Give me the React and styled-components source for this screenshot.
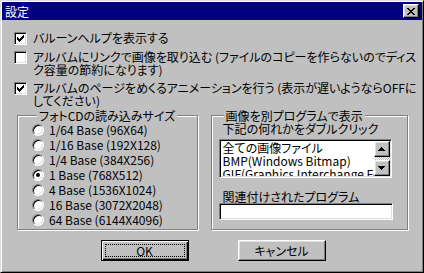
import React from "react";
import styled, { createGlobalStyle, css } from "styled-components";

const FACE = "#c0c0c0";

const Global = createGlobalStyle`
  html, body { margin: 0; padding: 0; background: ${FACE}; }
  body {
    font-family: "Noto Sans CJK JP", "Noto Sans", sans-serif;
    font-size: 12px;
  }
`;

const raised = css`
  border: 1px solid;
  border-color: #fff #000 #000 #fff;
  box-shadow: inset -1px -1px #808080, inset 1px 1px #dfdfdf;
`;

const sunken = css`
  border: 1px solid;
  border-color: #808080 #fff #fff #808080;
  box-shadow: inset 1px 1px #000, inset -1px -1px #dfdfdf;
`;

const Window = styled.div`
  box-sizing: border-box;
  width: 424px;
  height: 273px;
  padding: 1px;
  background: ${FACE};
  border: 1px solid;
  border-color: #dfdfdf #000 #000 #dfdfdf;
  box-shadow: inset 1px 1px #fff, inset -1px -1px #808080;
  display: flex;
  flex-direction: column;
  color: #000;
  font-family: "Noto Sans CJK JP", "Noto Sans", sans-serif;
  font-size: 12px;
  font-feature-settings: "palt";
`;

const TitleBar = styled.div`
  height: 18px;
  flex: none;
  background: #000080;
  color: #fff;
  display: flex;
  align-items: center;
  justify-content: space-between;
  padding: 0 3px 0 3px;
  line-height: 13px;
`;

const CloseButton = styled.div`
  box-sizing: border-box;
  width: 16px;
  height: 14px;
  background: ${FACE};
  ${raised};
  display: flex;
  align-items: center;
  justify-content: center;
`;

const Body = styled.div`
  flex: 1;
  display: flex;
  flex-direction: column;
  padding: 11px 14px 0 12px;
`;

const Options = styled.div`
  display: flex;
  flex-direction: column;
  gap: 5px;
`;

const CheckRow = styled.div`
  display: flex;
  align-items: flex-start;
  gap: 6px;
  line-height: 13px;
  white-space: nowrap;
`;

const CheckBox = styled.span`
  flex: none;
  box-sizing: border-box;
  width: 13px;
  height: 13px;
  margin-top: 1px;
  background: #fff;
  ${sunken};
  display: flex;
  align-items: center;
  justify-content: center;
`;

const Groups = styled.div`
  display: flex;
  gap: 13px;
  margin: 2px 0 0 3px;
`;

const Group = styled.fieldset`
  box-sizing: border-box;
  margin: 0;
  min-width: 0;
  width: ${(p) => p.$width}px;
  height: 121px;
  padding: 0 0 0 ${(p) => p.$pad}px;
  border: 1px solid #808080;
  box-shadow: inset 1px 1px #fff, 1px 1px #fff;
  display: flex;
  flex-direction: column;
`;

const Legend = styled.legend`
  margin-left: 5px;
  padding: 0 2px;
  line-height: 13px;
  background: ${FACE};
`;

const RadioRow = styled.div`
  height: 15px;
  display: flex;
  align-items: center;
  gap: 5px;
  white-space: nowrap;
`;

const Radio = styled.span`
  flex: none;
  box-sizing: border-box;
  width: 12px;
  height: 12px;
  border-radius: 50%;
  background: #fff;
  border: 1px solid;
  border-color: #808080 #fff #fff #808080;
  box-shadow: inset 1px 1px #000, inset -1px -1px #dfdfdf;
  display: flex;
  align-items: center;
  justify-content: center;

  ${(p) =>
    p.$checked &&
    css`
      &::after {
        content: "";
        width: 4px;
        height: 4px;
        border-radius: 50%;
        background: #000;
      }
    `}
`;

const Caption = styled.div`
  line-height: 13px;
  margin-left: 4px;
  white-space: nowrap;
`;

const ListBox = styled.div`
  box-sizing: border-box;
  width: 173px;
  height: 39px;
  margin-top: 4px;
  background: #fff;
  ${sunken};
  padding: 1px;
  display: flex;
`;

const Items = styled.div`
  flex: 1;
  min-width: 0;
  overflow: hidden;
  padding-left: 2px;
`;

const Item = styled.div`
  line-height: 13px;
  white-space: nowrap;
`;

const ScrollBar = styled.div`
  flex: none;
  width: 16px;
  display: flex;
  flex-direction: column;
`;

const ScrollButton = styled.div`
  box-sizing: border-box;
  flex: none;
  height: 16px;
  background: ${FACE};
  ${raised};
  display: flex;
  align-items: center;
  justify-content: center;
`;

const Track = styled.div`
  flex: 1;
  background: repeating-conic-gradient(${FACE} 0 25%, #fff 0 50%) 0 0 / 2px 2px;
`;

const TextBox = styled.div`
  box-sizing: border-box;
  width: 174px;
  height: 17px;
  background: #fff;
  ${sunken};
`;

const Buttons = styled.div`
  display: flex;
  justify-content: center;
  gap: 49px;
  margin-top: 10px;
  padding-left: 4px;
`;

const Button = styled.div`
  position: relative;
  box-sizing: border-box;
  width: 88px;
  height: 21px;
  background: ${FACE};
  display: flex;
  align-items: center;
  justify-content: center;
  line-height: 13px;
  ${(p) =>
    p.$default
      ? css`
          border: 1px solid #000;
          box-shadow: inset 1px 1px #fff, inset -1px -1px #000,
            inset -2px -2px #808080;
          &::after {
            content: "";
            position: absolute;
            inset: 3px;
            border: 1px dotted #000;
          }
        `
      : raised}
`;

const CheckMark = () => (
  <svg width="7" height="7" viewBox="0 0 7 7" shapeRendering="crispEdges">
    {[2, 3, 4, 3, 2, 1, 0].map((y, x) => (
      <rect key={x} x={x} y={y} width="1" height="3" fill="#000" />
    ))}
  </svg>
);

const CloseGlyph = () => (
  <svg width="8" height="7" viewBox="0 0 8 7" shapeRendering="crispEdges">
    <path
      d="M0 0h2v1h-2zM6 0h2v1h-2zM1 1h2v1h-2zM5 1h2v1h-2zM2 2h4v1h-4zM3 3h2v1h-2zM2 4h4v1h-4zM1 5h2v1h-2zM5 5h2v1h-2zM0 6h2v1h-2zM6 6h2v1h-2z"
      fill="#000"
    />
  </svg>
);

const Arrow = ({ down }) => (
  <svg width="7" height="4" viewBox="0 0 7 4" shapeRendering="crispEdges">
    <path
      d={down ? "M0 0h7v1h-7zM1 1h5v1h-5zM2 2h3v1h-3zM3 3h1v1h-1z" : "M3 0h1v1h-1zM2 1h3v1h-3zM1 2h5v1h-5zM0 3h7v1h-7z"}
      fill="#000"
    />
  </svg>
);

const options = [
  { checked: true, lines: ["バルーンヘルプを表示する"] },
  {
    checked: false,
    lines: [
      "アルバムにリンクで画像を取り込む (ファイルのコピーを作らないのでディス",
      "ク容量の節約になります)",
    ],
  },
  {
    checked: true,
    lines: [
      "アルバムのページをめくるアニメーションを行う (表示が遅いようならOFFに",
      "してください)",
    ],
  },
];

const sizes = [
  "1/64 Base (96X64)",
  "1/16 Base (192X128)",
  "1/4 Base (384X256)",
  "1 Base (768X512)",
  "4 Base (1536X1024)",
  "16 Base (3072X2048)",
  "64 Base (6144X4096)",
];

const formats = [
  "全ての画像ファイル",
  "BMP(Windows Bitmap)",
  "GIF(Graphics Interchange Format)",
];

export default function App() {
  return (
    <>
      <Global />
      <Window>
        <TitleBar>
          <span>設定</span>
          <CloseButton>
            <CloseGlyph />
          </CloseButton>
        </TitleBar>
        <Body>
          <Options>
            {options.map((o, i) => (
              <CheckRow key={i}>
                <CheckBox>{o.checked && <CheckMark />}</CheckBox>
                <span>
                  {o.lines.map((l, j) => (
                    <React.Fragment key={j}>
                      {j > 0 && <br />}
                      {l}
                    </React.Fragment>
                  ))}
                </span>
              </CheckRow>
            ))}
          </Options>

          <Groups>
            <Group $width={182} $pad={14}>
              <Legend>フォトCDの読み込みサイズ</Legend>
              {sizes.map((s, i) => (
                <RadioRow key={s}>
                  <Radio $checked={i === 3} />
                  <span>{s}</span>
                </RadioRow>
              ))}
            </Group>
            <Group $width={199} $pad={7}>
              <Legend>画像を別プログラムで表示</Legend>
              <Caption>下記の何れかをダブルクリック</Caption>
              <ListBox>
                <Items>
                  {formats.map((f) => (
                    <Item key={f}>{f}</Item>
                  ))}
                </Items>
                <ScrollBar>
                  <ScrollButton>
                    <Arrow />
                  </ScrollButton>
                  <Track />
                  <ScrollButton>
                    <Arrow down />
                  </ScrollButton>
                </ScrollBar>
              </ListBox>
              <Caption style={{ marginTop: 12 }}>関連付けされたプログラム</Caption>
              <TextBox />
            </Group>
          </Groups>

          <Buttons>
            <Button $default>OK</Button>
            <Button>キャンセル</Button>
          </Buttons>
        </Body>
      </Window>
    </>
  );
}
